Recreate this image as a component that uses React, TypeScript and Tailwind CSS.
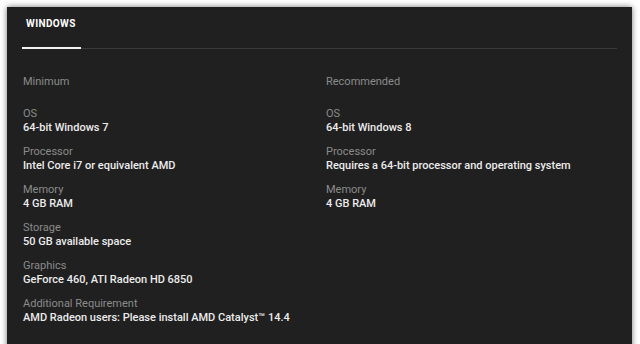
const minimum = [
  { label: 'OS', value: '64-bit Windows 7' },
  { label: 'Processor', value: 'Intel Core i7 or equivalent AMD' },
  { label: 'Memory', value: '4 GB RAM' },
  { label: 'Storage', value: '50 GB available space' },
  { label: 'Graphics', value: 'GeForce 460, ATI Radeon HD 6850' },
  { label: 'Additional Requirement', value: 'AMD Radeon users: Please install AMD Catalyst™ 14.4' },
];

const recommended = [
  { label: 'OS', value: '64-bit Windows 8' },
  { label: 'Processor', value: 'Requires a 64-bit processor and operating system' },
  { label: 'Memory', value: '4 GB RAM' },
];

type Spec = { label: string; value: string };

const SpecColumn = ({ title, items }: { title: string; items: Spec[] }) => {
  return (
    <div className="flex flex-col">
      <div className="text-[11px] leading-[14px] text-[#8b8b8b] mb-[18px]">{title}</div>
      <div className="flex flex-col gap-[11px]">
        {items.map((item) => (
          <div key={item.label} className="flex flex-col">
            <span className="text-[11px] leading-[14px] text-[#8b8b8b]">{item.label}</span>
            <span className="text-[11px] leading-[13px] font-medium text-[#ececec]">{item.value}</span>
          </div>
        ))}
      </div>
    </div>
  );
};

const App = () => {
  return (
    <div className="w-[640px] h-[344px] overflow-hidden bg-white pt-[7px] pl-[7px] pr-[8px] font-['Roboto',sans-serif]">
      <div className="h-[360px] bg-[#202020] shadow-[0_0_6px_rgba(0,0,0,0.55)] px-[15px] pt-[10px]">
        {/* Tabs */}
        <div className="flex border-b border-[#3a3a3a]">
          <div className="w-[59px] -mb-px border-b-2 border-[#f2f2f2] pl-[4px] pb-[16px]">
            <span className="block text-[10px] leading-[14px] font-bold tracking-[0.04em] text-white">
              WINDOWS
            </span>
          </div>
        </div>

        {/* Requirements */}
        <div className="grid grid-cols-2 gap-x-[12px] pt-[26px] pl-[1px]">
          <SpecColumn title="Minimum" items={minimum} />
          <SpecColumn title="Recommended" items={recommended} />
        </div>
      </div>
    </div>
  );
};

export default App;
